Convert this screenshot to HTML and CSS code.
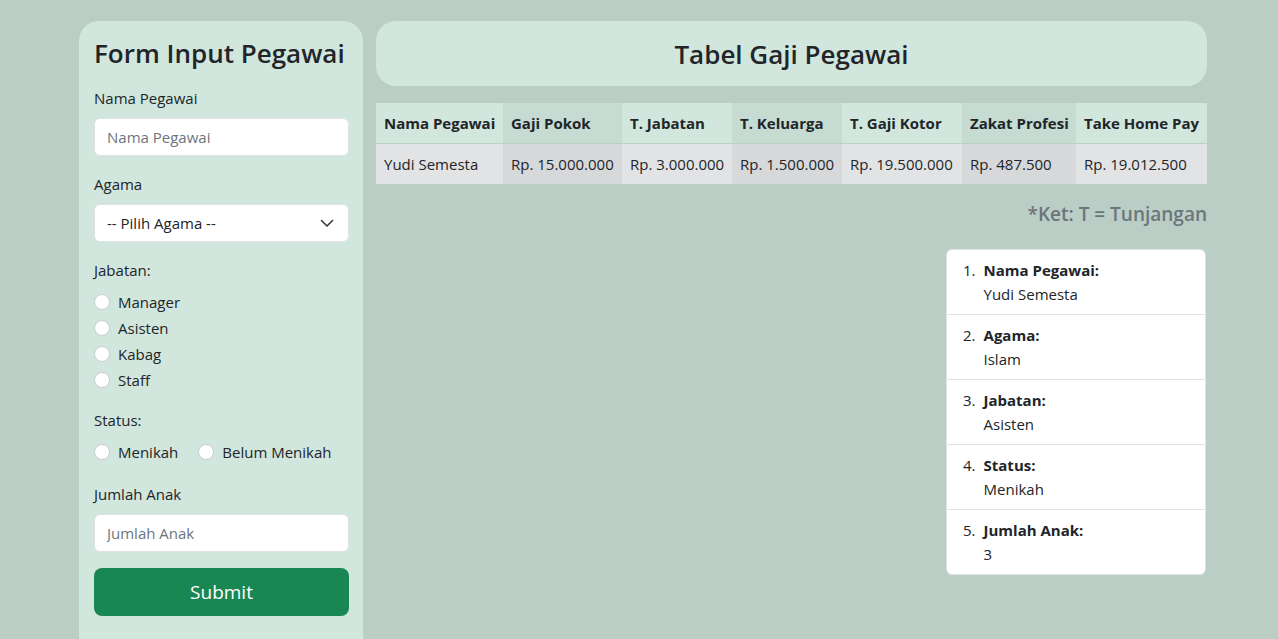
FILE: index.html
```html
<!DOCTYPE html>
<html lang="id">
<head>
<meta charset="utf-8">
<title>Gaji Pegawai</title>
<link rel="stylesheet" href="styles.css">
</head>
<body>
<div class="page">
  <aside class="form-card">
    <h3 class="form-title">Form Input Pegawai</h3>
    <div class="field">
      <label class="label">Nama Pegawai</label>
      <input class="input" type="text" placeholder="Nama Pegawai">
    </div>
    <div class="field">
      <label class="label">Agama</label>
      <div class="select">
        <span>-- Pilih Agama --</span>
        <svg width="14" height="10" viewBox="0 0 14 10"><path d="M1.5 2.5 7 8l5.5-5.5" fill="none" stroke="#343a40" stroke-width="1.6" stroke-linecap="round" stroke-linejoin="round"/></svg>
      </div>
    </div>
    <div class="field">
      <label class="label">Jabatan:</label>
      <div class="check"><span class="radio"></span><span>Manager</span></div>
      <div class="check"><span class="radio"></span><span>Asisten</span></div>
      <div class="check"><span class="radio"></span><span>Kabag</span></div>
      <div class="check"><span class="radio"></span><span>Staff</span></div>
    </div>
    <div class="field">
      <label class="label">Status:</label>
      <div class="inline-row">
        <div class="check inline"><span class="radio"></span><span>Menikah</span></div>
        <div class="check inline"><span class="radio"></span><span>Belum Menikah</span></div>
      </div>
    </div>
    <div class="field">
      <label class="label">Jumlah Anak</label>
      <input class="input" type="text" placeholder="Jumlah Anak">
    </div>
    <button class="submit">Submit</button>
  </aside>

  <main class="main">
    <div class="header-card"><h3 class="main-title">Tabel Gaji Pegawai</h3></div>
    <table class="salary">
      <colgroup>
        <col class="c1"><col class="c2"><col class="c3"><col class="c4"><col class="c5"><col class="c6"><col class="c7">
      </colgroup>
      <thead>
        <tr><th>Nama Pegawai</th><th>Gaji Pokok</th><th>T. Jabatan</th><th>T. Keluarga</th><th>T. Gaji Kotor</th><th>Zakat Profesi</th><th>Take Home Pay</th></tr>
      </thead>
      <tbody>
        <tr><td>Yudi Semesta</td><td>Rp. 15.000.000</td><td>Rp. 3.000.000</td><td>Rp. 1.500.000</td><td>Rp. 19.500.000</td><td>Rp. 487.500</td><td>Rp. 19.012.500</td></tr>
      </tbody>
    </table>
    <h5 class="note">*Ket: T = Tunjangan</h5>
    <ol class="summary">
      <li class="item"><span class="num">1.</span><div class="body"><div class="key">Nama Pegawai:</div>Yudi Semesta</div></li>
      <li class="item"><span class="num">2.</span><div class="body"><div class="key">Agama:</div>Islam</div></li>
      <li class="item"><span class="num">3.</span><div class="body"><div class="key">Jabatan:</div>Asisten</div></li>
      <li class="item"><span class="num">4.</span><div class="body"><div class="key">Status:</div>Menikah</div></li>
      <li class="item"><span class="num">5.</span><div class="body"><div class="key">Jumlah Anak:</div>3</div></li>
    </ol>
  </main>
</div>
</body>
</html>
```

FILE: styles.css
```css
* { box-sizing: border-box; }
html, body { margin: 0; padding: 0; }
body {
  background: #bacec5;
  font-family: "Open Sans", "Noto Sans", sans-serif;
  font-size: 15px;
  line-height: 24px;
  color: #212529;
  height: 639px;
  overflow: hidden;
}
.page {
  display: flex;
  align-items: flex-start;
  gap: 13px;
  width: 1128px;
  margin-left: 79px;
  padding-top: 21px;
}
.form-card {
  width: 284px;
  flex: none;
  background: #d1e6dd;
  border-radius: 20px;
  padding: 15px 14px 30px 15px;
}
.form-title {
  margin: 0 0 16px;
  font-size: 26px;
  font-weight: 600;
  line-height: 34px;
  white-space: nowrap;
}
.field { margin-bottom: 16px; }
.label { display: block; margin-bottom: 8px; line-height: 24px; }
.input, .select {
  display: flex;
  align-items: center;
  width: 100%;
  height: 38px;
  border: 1px solid #dee2e6;
  border-radius: 6px;
  background: #fff;
  padding: 6px 12px;
  font: inherit;
  color: #212529;
}
.input::placeholder { color: #6c757d; opacity: 1; }
.select { justify-content: space-between; padding-right: 14px; }
.check {
  display: flex;
  align-items: center;
  min-height: 24px;
  margin-bottom: 2px;
  white-space: nowrap;
}
.check:last-child { margin-bottom: 0; }
.inline-row { display: flex; padding-bottom: 2px; }
.inline { margin-right: 20px; margin-bottom: 0; flex: none; }
.inline:last-child { margin-right: 0; }
.radio {
  width: 16px;
  height: 16px;
  border: 1px solid #c9cdd1;
  border-radius: 50%;
  background: #fff;
  margin-right: 8px;
  flex: none;
}
.submit {
  display: block;
  width: 100%;
  height: 48px;
  border: 0;
  border-radius: 8px;
  background: #198754;
  color: #fff;
  font: inherit;
  font-size: 19px;
  margin-bottom: 30px;
}
.main { flex: 1; display: flex; flex-direction: column; }
.header-card {
  background: #d1e6dd;
  border-radius: 20px;
  height: 65px;
  display: flex;
  align-items: center;
  justify-content: center;
  margin-bottom: 17px;
}
.main-title { margin: 0; font-size: 26px; font-weight: 600; line-height: 34px; }
.salary {
  width: 100%;
  border-collapse: collapse;
  table-layout: fixed;
  margin-bottom: 16px;
}
.c1 { width: 127px; } .c2 { width: 119px; } .c3 { width: 110px; } .c4 { width: 110px; }
.c5 { width: 120px; } .c6 { width: 114px; } .c7 { width: 131px; }
.salary th, .salary td {
  padding: 8px;
  text-align: left;
  white-space: nowrap;
  line-height: 24px;
}
.salary th { background: #d1e6dd; font-weight: 700; border-bottom: 1px solid #bcd0c7; }
.salary th:nth-child(2n) { background: #c6dbd2; }
.salary td { background: #e2e3e5; }
.salary td:nth-child(2n) { background: #d7d8da; }
.note {
  margin: 0 0 21px;
  text-align: right;
  font-size: 19px;
  font-weight: 600;
  line-height: 28px;
  color: #6c757d;
}
.summary {
  list-style: none;
  margin: 0 1px 0 auto;
  padding: 0;
  width: 260px;
  background: #fff;
  border: 1px solid #dee2e6;
  border-radius: 6px;
}
.item {
  display: flex;
  align-items: flex-start;
  padding: 8px 16px;
  border-top: 1px solid #dee2e6;
}
.item:first-child { border-top: 0; }
.num { margin-right: 8px; }
.key { font-weight: 700; }
```
